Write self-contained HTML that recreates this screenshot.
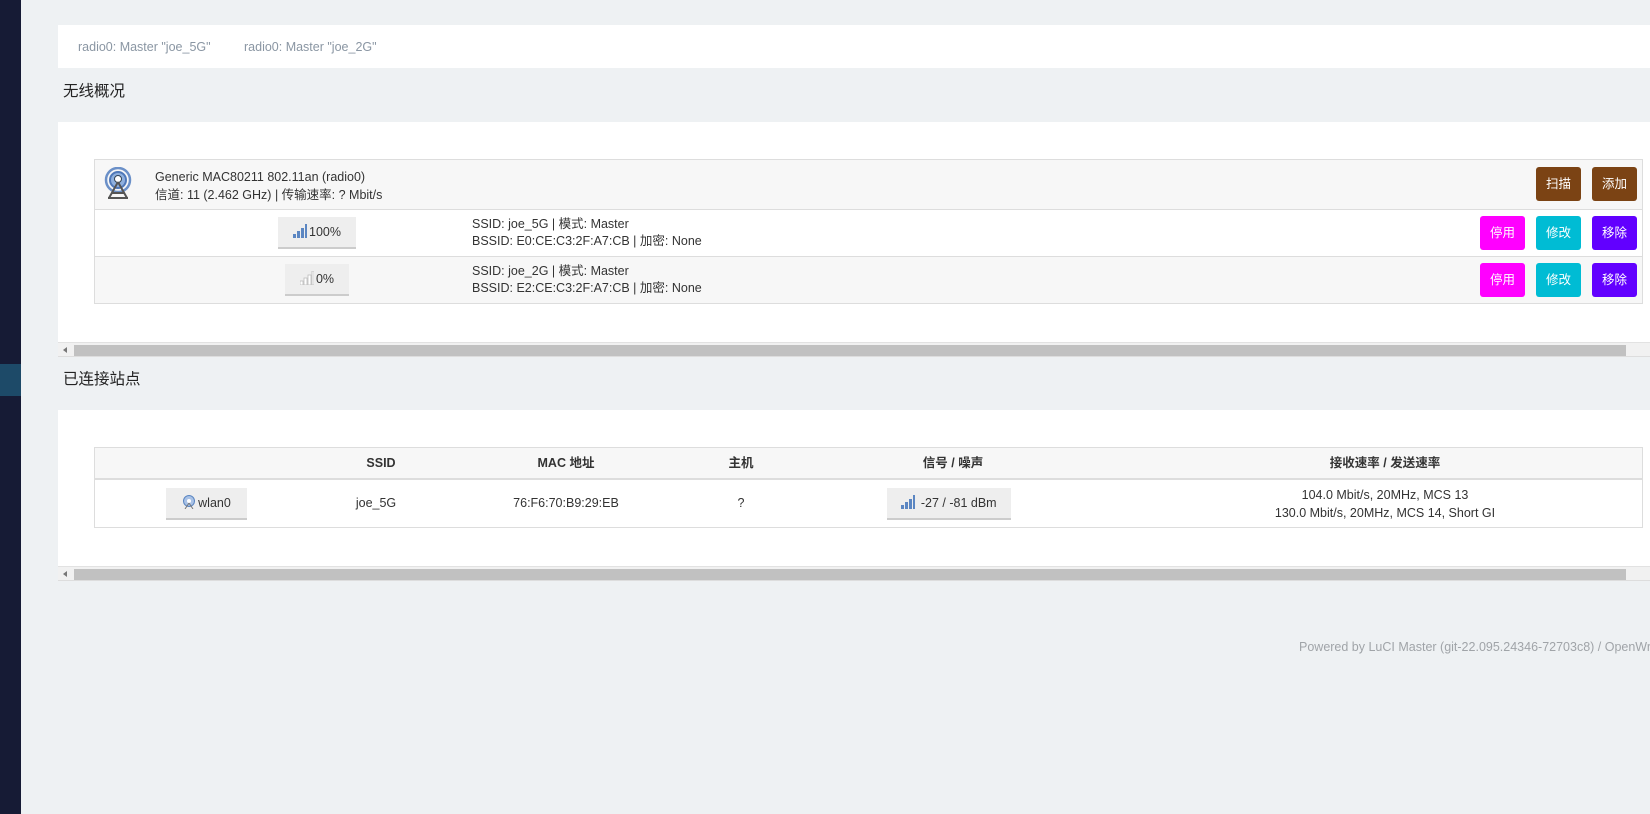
<!DOCTYPE html>
<html><head><meta charset="utf-8"><style>
*{box-sizing:border-box;margin:0;padding:0}
body{width:1650px;height:814px;overflow:hidden;background:#eef1f3;font-family:"Liberation Sans","Noto Sans CJK SC",sans-serif;font-size:12.5px;color:#333;position:relative;line-height:16px}
.abs{position:absolute;white-space:nowrap}
.side{left:0;top:0;width:21px;height:814px;background:#161b35}
.card{background:#fff;left:58px;width:1592px}
.tbl{left:94px;width:1549px;border:1px solid #ddd}
.row{position:absolute;left:0;right:0;border-bottom:1px solid #ddd}
.btn{position:absolute;color:#fff;border-radius:3px;font-size:12.5px;text-align:center;line-height:34px;height:34px;width:45px}
.sig{position:absolute;background:#eee;border-bottom:2px solid #ccc;text-align:center;white-space:nowrap}
.sig svg{vertical-align:-2px;margin-right:2px}
.sb{position:absolute;left:58px;width:1592px;height:15px;background:#f1f1f1;border-top:1px solid #e2e2e2;border-bottom:1px solid #ddd}
.sb .th{position:absolute;left:16px;top:2px;width:1552px;height:11px;background:#c1c1c1}
.sb .ar{position:absolute;left:5px;top:4px;width:0;height:0;border-top:3px solid transparent;border-bottom:3px solid transparent;border-right:4px solid #777}
.h2{font-size:15.5px;color:#222}
.hd{position:absolute;top:0;text-align:center;line-height:30px;white-space:nowrap}
</style></head><body>
<div class="abs side"></div>
<div class="abs" style="left:0;top:364px;width:21px;height:32px;background:#1d4a68"></div>

<div class="abs card" style="top:25px;height:43px"></div>
<div class="abs" style="left:78px;top:39px;color:#8a96a3">radio0: Master "joe_5G"</div>
<div class="abs" style="left:244px;top:39px;color:#8a96a3">radio0: Master "joe_2G"</div>

<div class="abs h2" style="left:63px;top:84px">无线概况</div>

<div class="abs card" style="top:122px;height:220px"></div>
<div class="abs tbl" style="top:159px;height:145px">
 <div class="row" style="top:0;height:50px;background:#f7f7f7">
  <svg class="abs" style="left:7px;top:7px" width="32" height="34" viewBox="0 0 32 34"><circle cx="16" cy="13" r="12" fill="none" stroke="#6b90c8" stroke-width="2.5"/><circle cx="16" cy="13" r="8" fill="#8fb0de" stroke="#4f78b8" stroke-width="2"/><circle cx="16" cy="12" r="3.5" fill="#fff" stroke="#345" stroke-width="1"/><path d="M16 15 L7 31 M16 15 L25 31 M10 26 H22 M6 31 H26" stroke="#555" stroke-width="2" fill="none"/></svg>
  <div class="abs" style="left:60px;top:8px;line-height:18px">Generic MAC80211 802.11an (radio0)<br>信道: 11 (2.462 GHz) | 传输速率: ? Mbit/s</div>
  <div class="btn" style="left:1441px;top:7px;background:#7b4314">扫描</div>
  <div class="btn" style="left:1497px;top:7px;background:#7b4314">添加</div>
 </div>
 <div class="row" style="top:50px;height:47px;background:#fff">
  <div class="sig" style="left:183px;top:7px;width:78px;height:32px;line-height:30px"><svg width="14" height="14" viewBox="0 0 14 14"><path d="M0 14V10H3V14ZM4 14V7H7V14ZM8 14V4H11V14ZM12 14V0H14V14Z" fill="#5b86c2"/></svg>100%</div>
  <div class="abs" style="left:377px;top:6px;line-height:17px">SSID: joe_5G | 模式: Master<br>BSSID: E0:CE:C3:2F:A7:CB | 加密: None</div>
  <div class="btn" style="left:1385px;top:6px;background:#f0f">停用</div>
  <div class="btn" style="left:1441px;top:6px;background:#00bcd4">修改</div>
  <div class="btn" style="left:1497px;top:6px;background:#6200ff">移除</div>
 </div>
 <div class="row" style="top:97px;height:46px;background:#f7f7f7;border-bottom:none">
  <div class="sig" style="left:190px;top:7px;width:64px;height:32px;line-height:30px"><svg width="14" height="14" viewBox="0 0 14 14"><path d="M0 14V10H3V14ZM4 14V7H7V14ZM8 14V4H11V14ZM12 14V0H14V14Z" fill="#fff" stroke="#bbb" stroke-width=".8"/></svg>0%</div>
  <div class="abs" style="left:377px;top:6px;line-height:17px">SSID: joe_2G | 模式: Master<br>BSSID: E2:CE:C3:2F:A7:CB | 加密: None</div>
  <div class="btn" style="left:1385px;top:6px;background:#f0f">停用</div>
  <div class="btn" style="left:1441px;top:6px;background:#00bcd4">修改</div>
  <div class="btn" style="left:1497px;top:6px;background:#6200ff">移除</div>
 </div>
</div>
<div class="sb" style="top:342px"><div class="ar"></div><div class="th"></div></div>

<div class="abs h2" style="left:63px;top:372px">已连接站点</div>

<div class="abs card" style="top:410px;height:157px"></div>
<div class="abs tbl" style="top:447px;height:81px">
 <div class="row" style="top:0;height:32px;background:#f7f7f7;border-bottom:2px solid #ddd;font-weight:bold;color:#333">
  <div class="hd" style="left:236px;width:100px">SSID</div>
  <div class="hd" style="left:396px;width:150px">MAC 地址</div>
  <div class="hd" style="left:616px;width:60px">主机</div>
  <div class="hd" style="left:783px;width:150px">信号 / 噪声</div>
  <div class="hd" style="left:1140px;width:300px">接收速率 / 发送速率</div>
 </div>
 <div class="row" style="top:32px;height:48px;border-bottom:none">
  <div class="sig" style="left:71px;top:8px;width:81px;height:32px;line-height:30px"><svg width="14" height="14" viewBox="0 0 14 14"><circle cx="7" cy="6" r="5.5" fill="#a9c2e6" stroke="#5b86c2"/><circle cx="7" cy="6" r="2" fill="#fff"/><path d="M7 8L3 14M7 8L11 14" stroke="#777"/></svg>wlan0</div>
  <div class="abs" style="left:231px;width:100px;text-align:center;top:15px">joe_5G</div>
  <div class="abs" style="left:396px;width:150px;text-align:center;top:15px">76:F6:70:B9:29:EB</div>
  <div class="abs" style="left:616px;width:60px;text-align:center;top:15px">?</div>
  <div class="sig" style="left:792px;top:8px;width:124px;height:32px;line-height:30px"><svg width="14" height="14" viewBox="0 0 14 14"><path d="M0 14V10H3V14ZM4 14V7H7V14ZM8 14V4H11V14ZM12 14V0H14V14Z" fill="#5b86c2"/></svg> -27 / -81 dBm</div>
  <div class="abs" style="left:1140px;width:300px;text-align:center;top:6px;line-height:18px">104.0 Mbit/s, 20MHz, MCS 13<br>130.0 Mbit/s, 20MHz, MCS 14, Short GI</div>
 </div>
</div>
<div class="sb" style="top:566px"><div class="ar"></div><div class="th"></div></div>

<div class="abs" style="left:1299px;top:639px;color:#a0a4a8">Powered by LuCI Master (git-22.095.24346-72703c8) / OpenWrt R</div>
</body></html>
